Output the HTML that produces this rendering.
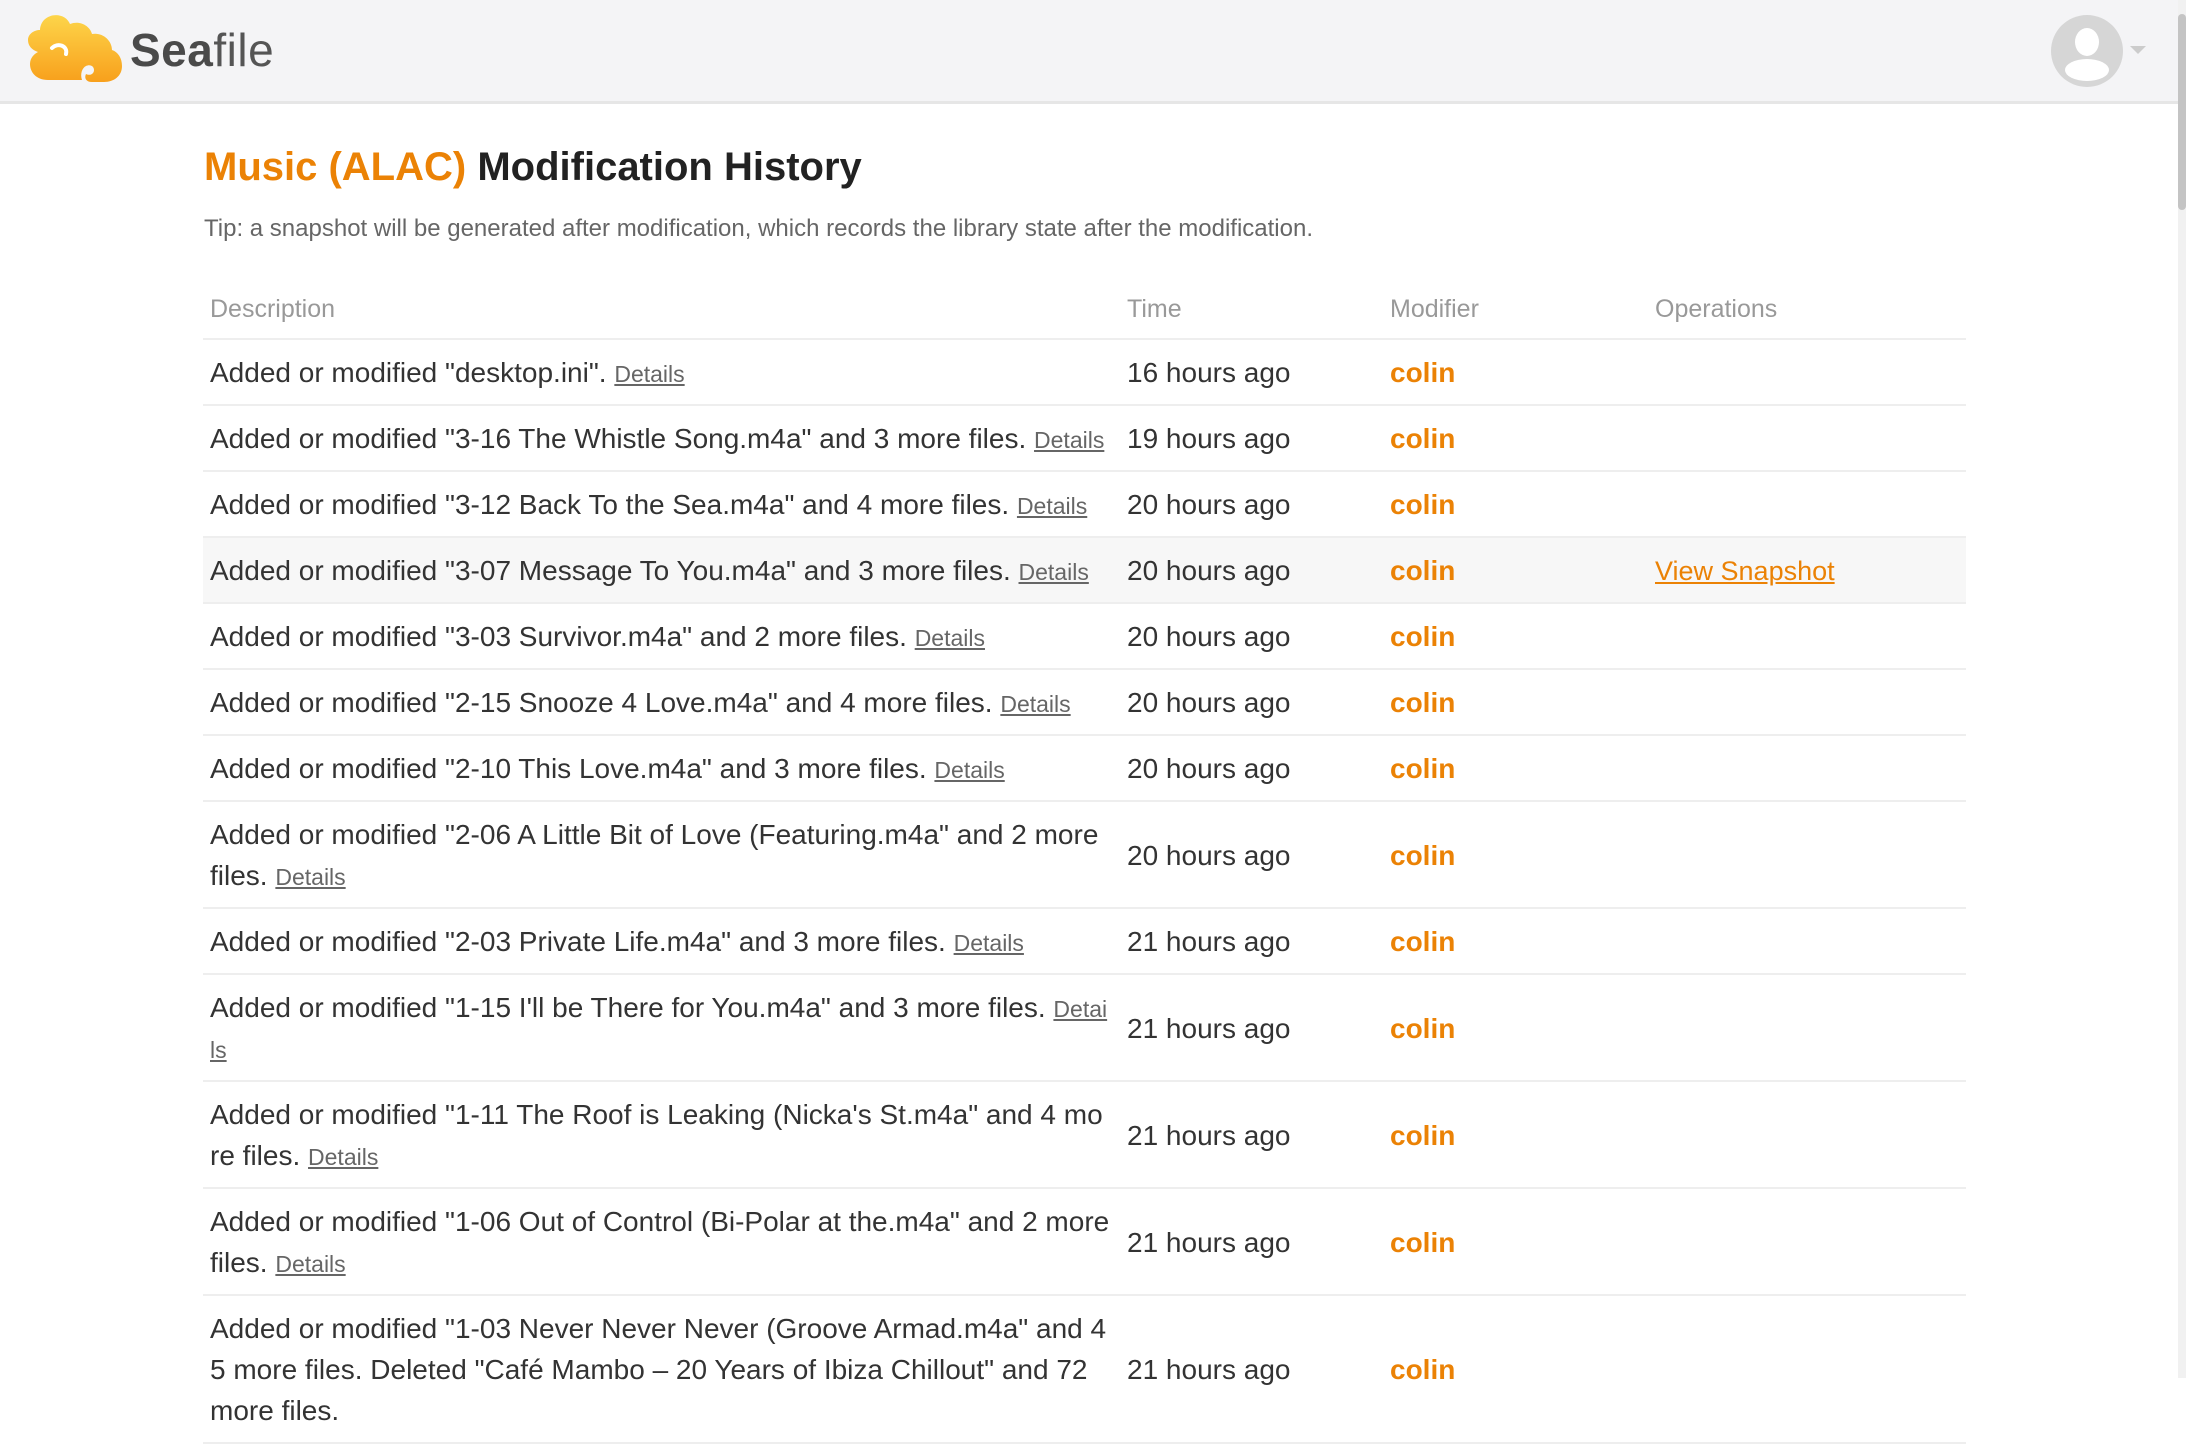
<!DOCTYPE html>
<html><head><meta charset="utf-8"><style>
*{margin:0;padding:0;box-sizing:border-box}
html,body{width:2186px;height:1378px;overflow:hidden;background:#fff;font-family:"Liberation Sans",Arial,sans-serif;color:#333}
.hdr{position:absolute;left:0;top:0;width:2178px;height:104px;background:#f4f4f6;border-bottom:3px solid #e6e6e6}
.logo{position:absolute;left:22px;top:12px}
.brand{position:absolute;left:130px;top:23px;font-size:46px;color:#555;letter-spacing:0.5px}
.brand b{font-weight:bold;color:#4a4a4a}
.avatar{position:absolute;left:2050px;top:14px}
.caret{position:absolute;left:2130px;top:46px;width:0;height:0;border-left:8px solid transparent;border-right:8px solid transparent;border-top:8px solid #ccc}
.sb{position:absolute;left:2178px;top:0;width:8px;height:1378px;background:#f1f1f1}
.sb div{position:absolute;left:0;top:14px;width:8px;height:196px;background:#c4c4c4;border-radius:4px}
h1{position:absolute;left:204px;top:145px;font-size:40px;font-weight:bold;color:#222;white-space:nowrap}
h1 span{color:#eb8205}
.tip{position:absolute;left:204px;top:215px;font-size:24px;color:#666;white-space:nowrap}
table{position:absolute;left:203px;top:284px;width:1763px;border-collapse:collapse;table-layout:fixed}
th{font-weight:normal;color:#999;font-size:25px;text-align:left;padding:7px 0 10px 7px;height:55px;border-bottom:2px solid #eee}
td{font-size:28px;line-height:41px;padding:12px 0 11px 7px;border-bottom:2px solid #eee;vertical-align:middle}
td.d{word-break:break-all;padding-right:10px}
td a{font-size:23px;line-height:20px;color:#666;text-decoration:underline}
td.m{color:#eb8205;font-weight:bold}
td a.v{color:#eb8205;font-size:27px}
tr.hl td{background:#f7f7f7}
</style></head><body>
<div class="hdr">
<svg class="logo" width="104" height="70" viewBox="0 0 104 70">
<defs><linearGradient id="g" x1="0" y1="0" x2="0" y2="1"><stop offset="0" stop-color="#fdd54a"/><stop offset="1" stop-color="#f8a01c"/></linearGradient></defs>
<path d="M22 8c8-8 22-6 26 4 10-4 20 2 22 10 10-2 20 6 20 16 6 2 10 8 10 16 0 10-8 16-18 16H70c-6 0-8-4-6-8 4 2 8 0 8-4s-4-6-8-4c-4 2-6 8-4 14H26C14 68 8 60 8 52c0-6 4-10 8-12-6-2-10-6-10-12 0-6 6-10 12-10 0-4 2-8 4-10z" fill="url(#g)"/>
<path d="M30 36c6-6 16-2 14 6" stroke="#fff" stroke-width="4" fill="none" stroke-linecap="round"/>
</svg>
<div class="brand"><b>Sea</b>file</div>
<svg class="avatar" width="74" height="74" viewBox="0 0 74 74"><circle cx="37" cy="37" r="36" fill="#d6d6d6"/><ellipse cx="37" cy="28" rx="12" ry="14" fill="#fff"/><ellipse cx="37" cy="56" rx="22" ry="11" fill="#fff"/></svg>
<div class="caret"></div>
</div>
<div class="sb"><div></div></div>
<h1><span>Music (ALAC)</span> Modification History</h1>
<div class="tip">Tip: a snapshot will be generated after modification, which records the library state after the modification.</div>
<table>
<colgroup><col style="width:917px"><col style="width:263px"><col style="width:265px"><col></colgroup>
<tr><th>Description</th><th>Time</th><th>Modifier</th><th>Operations</th></tr>
<tr><td class="d">Added or modified "desktop.ini". <a>Details</a></td><td>16 hours ago</td><td class="m">colin</td><td></td></tr>
<tr><td class="d">Added or modified "3-16 The Whistle Song.m4a" and 3 more files. <a>Details</a></td><td>19 hours ago</td><td class="m">colin</td><td></td></tr>
<tr><td class="d">Added or modified "3-12 Back To the Sea.m4a" and 4 more files. <a>Details</a></td><td>20 hours ago</td><td class="m">colin</td><td></td></tr>
<tr class="hl"><td class="d">Added or modified "3-07 Message To You.m4a" and 3 more files. <a>Details</a></td><td>20 hours ago</td><td class="m">colin</td><td><a class="v">View Snapshot</a></td></tr>
<tr><td class="d">Added or modified "3-03 Survivor.m4a" and 2 more files. <a>Details</a></td><td>20 hours ago</td><td class="m">colin</td><td></td></tr>
<tr><td class="d">Added or modified "2-15 Snooze 4 Love.m4a" and 4 more files. <a>Details</a></td><td>20 hours ago</td><td class="m">colin</td><td></td></tr>
<tr><td class="d">Added or modified "2-10 This Love.m4a" and 3 more files. <a>Details</a></td><td>20 hours ago</td><td class="m">colin</td><td></td></tr>
<tr><td class="d">Added or modified "2-06 A Little Bit of Love (Featuring.m4a" and 2 more files. <a>Details</a></td><td>20 hours ago</td><td class="m">colin</td><td></td></tr>
<tr><td class="d">Added or modified "2-03 Private Life.m4a" and 3 more files. <a>Details</a></td><td>21 hours ago</td><td class="m">colin</td><td></td></tr>
<tr><td class="d">Added or modified "1-15 I'll be There for You.m4a" and 3 more files. <a>Details</a></td><td>21 hours ago</td><td class="m">colin</td><td></td></tr>
<tr><td class="d">Added or modified "1-11 The Roof is Leaking (Nicka's St.m4a" and 4 more files. <a>Details</a></td><td>21 hours ago</td><td class="m">colin</td><td></td></tr>
<tr><td class="d">Added or modified "1-06 Out of Control (Bi-Polar at the.m4a" and 2 more files. <a>Details</a></td><td>21 hours ago</td><td class="m">colin</td><td></td></tr>
<tr><td class="d">Added or modified "1-03 Never Never Never (Groove Armad.m4a" and 45 more files. Deleted "Café Mambo – 20 Years of Ibiza Chillout" and 72 more files.</td><td>21 hours ago</td><td class="m">colin</td><td></td></tr>
</table>
</body></html>
